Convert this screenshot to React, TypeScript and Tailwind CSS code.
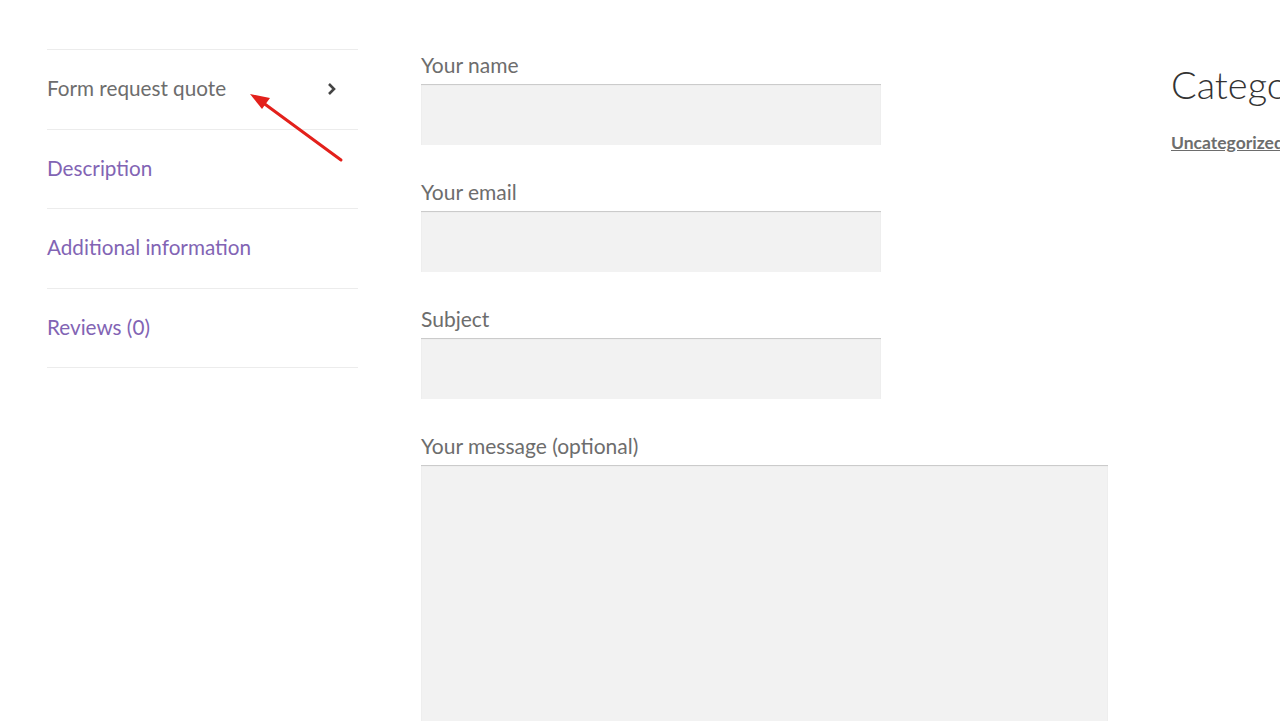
import React from "react";

const font = { fontFamily: "Lato, 'Noto Sans', sans-serif" };

function Field({ label, tall }: { label: string; tall?: boolean }) {
  return (
    <div className="mb-[33px]">
      <label className="block h-[30px] leading-[28px] text-[21px] text-[#6d6d6d] mb-[3px]">{label}</label>
      <div
        className={
          (tall ? "w-[687px] h-[300px]" : "w-[460px] h-[61px]") +
          " bg-[#f2f2f2] shadow-[inset_0_1px_1px_rgba(0,0,0,0.18)]"
        }
      />
    </div>
  );
}

export default function App() {
  const tabs = ["Form request quote", "Description", "Additional information", "Reviews (0)"];
  return (
    <div className="relative w-[1280px] h-[721px] overflow-hidden bg-white" style={font}>
      <div className="flex pl-[47px] pt-[49px] gap-[63px]">
        <ul className="w-[311px] shrink-0 border-t border-[#ececec]">
          {tabs.map((t, i) => (
            <li
              key={t}
              className="h-[79.5px] border-b border-[#ececec] flex items-center justify-between pr-[21px] pb-[1px]"
            >
              <span className={"text-[20.7px] " + (i === 0 ? "text-[#6d6d6d]" : "text-[#8264b4]")}>{t}</span>
              {i === 0 && (
                <svg width="10" height="14" viewBox="0 0 10 14">
                  <polyline points="2,2 7,7 2,12" fill="none" stroke="#444" strokeWidth="2.6" />
                </svg>
              )}
            </li>
          ))}
        </ul>
        <div className="w-[687px] shrink-0 pt-[2px]">
          <Field label="Your name" />
          <Field label="Your email" />
          <Field label="Subject" />
          <Field label="Your message (optional)" tall />
        </div>
        <div className="shrink-0 pt-[13px]">
          <h2 className="text-[38px] font-light text-[#333] leading-[44px] whitespace-nowrap">Categories</h2>
          <a className="block mt-[24px] text-[17.5px] font-bold text-[#6d6d6d] underline whitespace-nowrap">Uncategorized</a>
        </div>
      </div>
      <svg className="absolute left-[240px] top-[85px]" width="110" height="85" viewBox="240 85 110 85">
        <line x1="341" y1="160" x2="262" y2="102" stroke="#e3201b" strokeWidth="3" strokeLinecap="round" />
        <polygon points="250,94 270,98 262,109" fill="#e3201b" />
      </svg>
    </div>
  );
}
